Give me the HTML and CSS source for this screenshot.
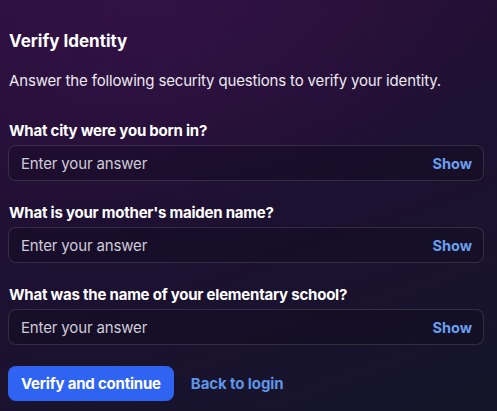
FILE: index.html
```html
<!DOCTYPE html>
<html lang="en">
<head>
<meta charset="utf-8">
<title>Verify Identity</title>
<link rel="stylesheet" href="styles.css">
</head>
<body>
<main class="panel">
  <h1 class="title">Verify Identity</h1>
  <p class="intro">Answer the following security questions to verify your identity.</p>
  <form class="form">
    <div class="field">
      <label class="label">What city were you born in?</label>
      <div class="input">
        <span class="placeholder">Enter your answer</span>
        <span class="show">Show</span>
      </div>
    </div>
    <div class="field">
      <label class="label">What is your mother's maiden name?</label>
      <div class="input">
        <span class="placeholder">Enter your answer</span>
        <span class="show">Show</span>
      </div>
    </div>
    <div class="field">
      <label class="label">What was the name of your elementary school?</label>
      <div class="input">
        <span class="placeholder">Enter your answer</span>
        <span class="show">Show</span>
      </div>
    </div>
    <div class="actions">
      <button type="button" class="primary">Verify and continue</button>
      <a class="link" href="#">Back to login</a>
    </div>
  </form>
</main>
</body>
</html>
```
FILE: styles.css
```css
* { box-sizing: border-box; }
html, body { height: 100%; }
body {
  margin: 0;
  font-family: Inter, "Noto Sans", "Liberation Sans", sans-serif;
  color: #f4f2f7;
  background:
    radial-gradient(ellipse 70% 55% at 30% 0%, rgba(60, 20, 80, 0.55), rgba(60, 20, 80, 0) 100%),
    linear-gradient(160deg, #2a0f3b 0%, #1e1032 45%, #141529 100%);
  overflow: hidden;
}
.panel {
  padding: 29px 13px 0 8px;
}
.title {
  margin: 0 0 0 1px;
  font-size: 17px;
  line-height: 24px;
  font-weight: 700;
  color: #ffffff;
}
.intro {
  margin: 17px 0 0 1px;
  font-size: 15px;
  line-height: 22px;
  letter-spacing: -0.16px;
  color: #ece9f1;
}
.form {
  margin-top: 29px;
  display: flex;
  flex-direction: column;
  gap: 22px;
}
.field {
  display: flex;
  flex-direction: column;
  gap: 4px;
}
.label {
  margin-left: 1px;
  font-size: 15px;
  line-height: 20px;
  font-weight: 700;
  letter-spacing: -0.22px;
  color: #ffffff;
}
.input {
  height: 36px;
  display: flex;
  align-items: center;
  justify-content: space-between;
  padding: 0 11px 0 12px;
  border: 1px solid rgba(255, 255, 255, 0.13);
  border-radius: 8px;
  background: rgba(10, 6, 22, 0.28);
}
.placeholder {
  font-size: 15px;
  letter-spacing: -0.15px;
  color: #cfcbd8;
}
.show {
  font-size: 14.5px;
  font-weight: 700;
  color: #6a9ff0;
}
.actions {
  display: flex;
  align-items: center;
  gap: 17px;
  margin-top: -1px;
}
.primary {
  height: 35px;
  padding: 0 13px;
  border: none;
  border-radius: 8px;
  background: #2f64f2;
  color: #ffffff;
  font-family: inherit;
  font-size: 15px;
  font-weight: 700;
  letter-spacing: -0.2px;
}
.link {
  font-size: 15px;
  font-weight: 700;
  letter-spacing: -0.1px;
  color: #5e94e6;
  text-decoration: none;
}
```
